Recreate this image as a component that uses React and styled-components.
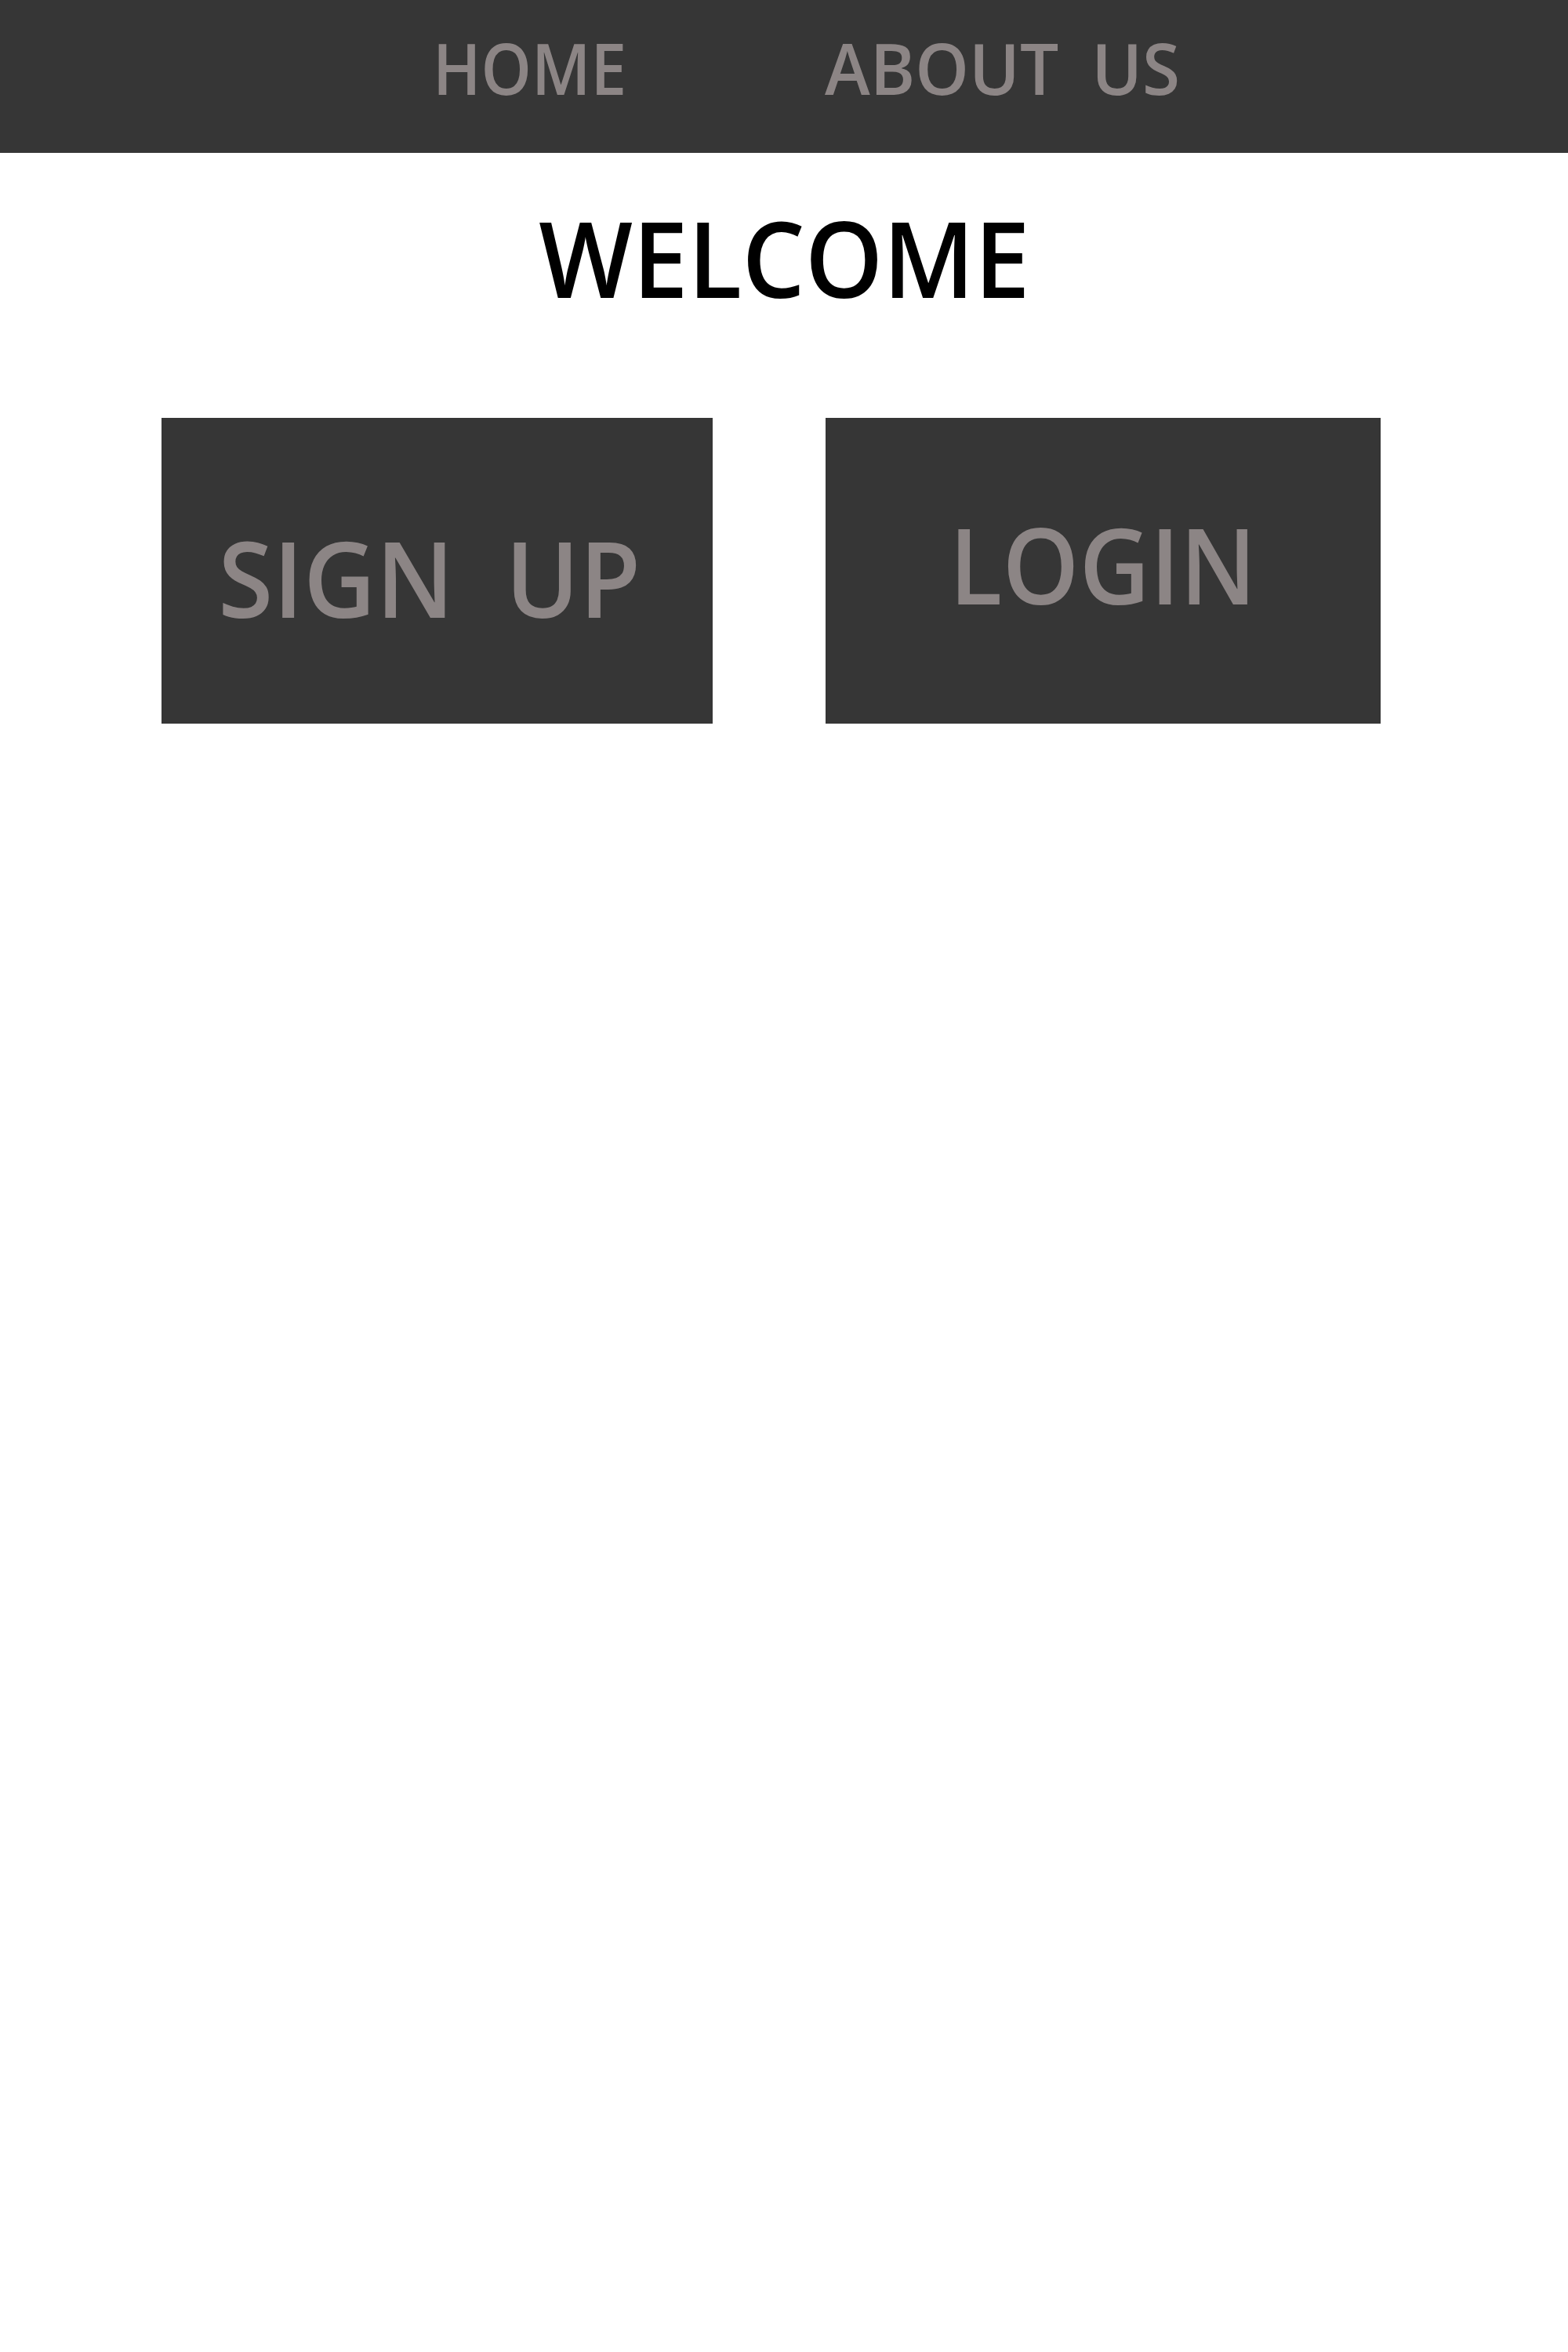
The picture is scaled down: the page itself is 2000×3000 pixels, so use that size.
import React from 'react';
import styled, { createGlobalStyle } from 'styled-components';

const GlobalStyle = createGlobalStyle`
  body {
    margin: 0;
    background: #ffffff;
    font-family: "Open Sans", "Noto Sans", sans-serif;
  }
`;

// the page font is a narrow humanist sans; squeeze Open Sans to match
const Narrow = styled.span`
  display: inline-block;
  transform: scaleX(${(p) => p.$sx || 0.9});
  transform-origin: ${(p) => p.$origin || 'center'};
  white-space: nowrap;
`;

const NavBar = styled.nav`
  height: 195px;
  background: #363636;
  display: flex;
  align-items: flex-start;
  gap: 225px;
  padding-left: 552px;
`;

const NavLink = styled.a`
  color: #8c8585;
  font-size: 91px;
  font-weight: 600;
  line-height: 1;
  margin-top: 41px;
  text-decoration: none;
  word-spacing: 20px;
`;

const Title = styled.h1`
  margin: 66px 0 0;
  text-align: center;
  font-size: 134px;
  font-weight: 600;
  line-height: 1;
  color: #000;
`;

const ButtonRow = styled.div`
  display: flex;
  gap: 144px;
  padding-left: 206px;
  margin-top: 138px;
`;

const BigButton = styled.button`
  width: ${(p) => p.$width}px;
  height: 390px;
  display: flex;
  justify-content: center;
  align-items: flex-start;
  background: #363636;
  border: none;
  color: #8c8585;
  font-family: "Open Sans", "Noto Sans", sans-serif;
  font-size: 134px;
  font-weight: 600;
  line-height: 1;
  padding: ${(p) => p.$top}px ${(p) => p.$right || 0}px 0 0;
  word-spacing: 34px;
  cursor: pointer;
`;

export default function App() {
  return (
    <>
      <GlobalStyle />
      <NavBar>
        <NavLink href="#"><Narrow $origin="left">HOME</Narrow></NavLink>
        <NavLink href="#"><Narrow $origin="left" $sx={0.96}>ABOUT US</Narrow></NavLink>
      </NavBar>
      <Title><Narrow $sx={0.945}>WELCOME</Narrow></Title>
      <ButtonRow>
        <BigButton $width={703} $top={136} $right={20}>
          <Narrow $sx={0.95}>SIGN UP</Narrow>
        </BigButton>
        <BigButton $width={708} $top={119}>
          <Narrow $sx={0.93}>LOGIN</Narrow>
        </BigButton>
      </ButtonRow>
    </>
  );
}
